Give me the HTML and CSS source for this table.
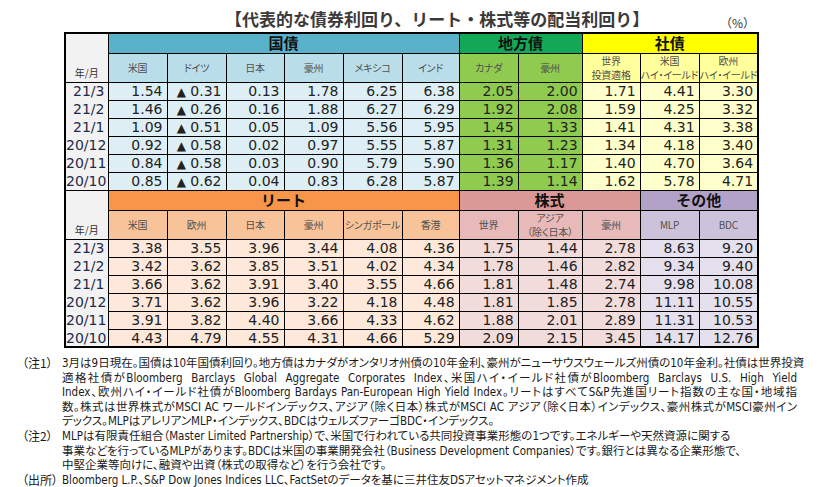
FILE: index.html
```html
<!DOCTYPE html>
<html lang="ja">
<head>
<meta charset="utf-8">
<link rel="stylesheet" href="styles.css">
</head>
<body>
<div class="page">
  <div class="head">
    <div class="title">【代表的な債券利回り、リート・株式等の配当利回り】</div>
    <div class="unit">（%）</div>
  </div>
  <table class="tbl">
    <colgroup>
      <col style="width:43px"><col style="width:59px"><col style="width:59px"><col style="width:58px"><col style="width:59px"><col style="width:59px"><col style="width:57px"><col style="width:59px"><col style="width:64px"><col style="width:58px"><col style="width:59px"><col style="width:59px">
    </colgroup>
    <tbody>
      <tr class="h1">
        <td class="ym" rowspan="2">年/月</td>
        <td class="grp a-h" colspan="6">国債</td>
        <td class="grp b-h" colspan="2">地方債</td>
        <td class="grp c-h" colspan="3">社債</td>
      </tr>
      <tr class="h2">
        <td class="sub a-s">米国</td><td class="sub a-s">ドイツ</td><td class="sub a-s">日本</td><td class="sub a-s">豪州</td><td class="sub a-s">メキシコ</td><td class="sub a-s">インド</td>
        <td class="sub b-s">カナダ</td><td class="sub b-s">豪州</td>
        <td class="sub c-s">世界<br>投資適格</td><td class="sub c-s">米国<br>ハイ・イールド</td><td class="sub c-s">欧州<br>ハイ・イールド</td>
      </tr>
      <tr class="dr"><td class="yr">21/3</td><td class="a-d">1.54</td><td class="a-d"><span class="neg">▲</span> 0.31</td><td class="a-d">0.13</td><td class="a-d">1.78</td><td class="a-d">6.25</td><td class="a-d">6.38</td><td class="b-d">2.05</td><td class="b-d">2.00</td><td class="c-d">1.71</td><td class="c-d">4.41</td><td class="c-d">3.30</td></tr>
      <tr class="dr"><td class="yr">21/2</td><td class="a-d">1.46</td><td class="a-d"><span class="neg">▲</span> 0.26</td><td class="a-d">0.16</td><td class="a-d">1.88</td><td class="a-d">6.27</td><td class="a-d">6.29</td><td class="b-d">1.92</td><td class="b-d">2.08</td><td class="c-d">1.59</td><td class="c-d">4.25</td><td class="c-d">3.32</td></tr>
      <tr class="dr"><td class="yr">21/1</td><td class="a-d">1.09</td><td class="a-d"><span class="neg">▲</span> 0.51</td><td class="a-d">0.05</td><td class="a-d">1.09</td><td class="a-d">5.56</td><td class="a-d">5.95</td><td class="b-d">1.45</td><td class="b-d">1.33</td><td class="c-d">1.41</td><td class="c-d">4.31</td><td class="c-d">3.38</td></tr>
      <tr class="dr"><td class="yr">20/12</td><td class="a-d">0.92</td><td class="a-d"><span class="neg">▲</span> 0.58</td><td class="a-d">0.02</td><td class="a-d">0.97</td><td class="a-d">5.55</td><td class="a-d">5.87</td><td class="b-d">1.31</td><td class="b-d">1.23</td><td class="c-d">1.34</td><td class="c-d">4.18</td><td class="c-d">3.40</td></tr>
      <tr class="dr"><td class="yr">20/11</td><td class="a-d">0.84</td><td class="a-d"><span class="neg">▲</span> 0.58</td><td class="a-d">0.03</td><td class="a-d">0.90</td><td class="a-d">5.79</td><td class="a-d">5.90</td><td class="b-d">1.36</td><td class="b-d">1.17</td><td class="c-d">1.40</td><td class="c-d">4.70</td><td class="c-d">3.64</td></tr>
      <tr class="dr"><td class="yr">20/10</td><td class="a-d">0.85</td><td class="a-d"><span class="neg">▲</span> 0.62</td><td class="a-d">0.04</td><td class="a-d">0.83</td><td class="a-d">6.28</td><td class="a-d">5.87</td><td class="b-d">1.39</td><td class="b-d">1.14</td><td class="c-d">1.62</td><td class="c-d">5.78</td><td class="c-d">4.71</td></tr>

      <tr class="h1">
        <td class="ym" rowspan="2">年/月</td>
        <td class="grp d-h" colspan="6">リート</td>
        <td class="grp e-h" colspan="3">株式</td>
        <td class="grp f-h" colspan="2">その他</td>
      </tr>
      <tr class="h2">
        <td class="sub d-s">米国</td><td class="sub d-s">欧州</td><td class="sub d-s">日本</td><td class="sub d-s">豪州</td><td class="sub d-s">シンガポール</td><td class="sub d-s">香港</td>
        <td class="sub e-s">世界</td><td class="sub e-s">アジア<br>（除く日本）</td><td class="sub e-s">豪州</td>
        <td class="sub f-s">MLP</td><td class="sub f-s">BDC</td>
      </tr>
      <tr class="dr"><td class="yr">21/3</td><td class="d-d">3.38</td><td class="d-d">3.55</td><td class="d-d">3.96</td><td class="d-d">3.44</td><td class="d-d">4.08</td><td class="d-d">4.36</td><td class="e-d">1.75</td><td class="e-d">1.44</td><td class="e-d">2.78</td><td class="f-d">8.63</td><td class="f-d">9.20</td></tr>
      <tr class="dr"><td class="yr">21/2</td><td class="d-d">3.42</td><td class="d-d">3.62</td><td class="d-d">3.85</td><td class="d-d">3.51</td><td class="d-d">4.02</td><td class="d-d">4.34</td><td class="e-d">1.78</td><td class="e-d">1.46</td><td class="e-d">2.82</td><td class="f-d">9.34</td><td class="f-d">9.40</td></tr>
      <tr class="dr"><td class="yr">21/1</td><td class="d-d">3.66</td><td class="d-d">3.62</td><td class="d-d">3.91</td><td class="d-d">3.40</td><td class="d-d">3.55</td><td class="d-d">4.66</td><td class="e-d">1.81</td><td class="e-d">1.48</td><td class="e-d">2.74</td><td class="f-d">9.98</td><td class="f-d">10.08</td></tr>
      <tr class="dr"><td class="yr">20/12</td><td class="d-d">3.71</td><td class="d-d">3.62</td><td class="d-d">3.96</td><td class="d-d">3.22</td><td class="d-d">4.18</td><td class="d-d">4.48</td><td class="e-d">1.81</td><td class="e-d">1.85</td><td class="e-d">2.78</td><td class="f-d">11.11</td><td class="f-d">10.55</td></tr>
      <tr class="dr"><td class="yr">20/11</td><td class="d-d">3.91</td><td class="d-d">3.82</td><td class="d-d">4.40</td><td class="d-d">3.66</td><td class="d-d">4.33</td><td class="d-d">4.62</td><td class="e-d">1.88</td><td class="e-d">2.01</td><td class="e-d">2.89</td><td class="f-d">11.31</td><td class="f-d">10.53</td></tr>
      <tr class="dr last"><td class="yr">20/10</td><td class="d-d">4.43</td><td class="d-d">4.79</td><td class="d-d">4.55</td><td class="d-d">4.31</td><td class="d-d">4.66</td><td class="d-d">5.29</td><td class="e-d">2.09</td><td class="e-d">2.15</td><td class="e-d">3.45</td><td class="f-d">14.17</td><td class="f-d">12.76</td></tr>
    </tbody>
  </table>

  <div class="notes">
    <div class="lbl">（注1）</div>
    <div class="body">
      <span class="jl">3月は9日現在。国債は10年国債利回り。地方債はカナダがオンタリオ州債の10年金利、豪州がニューサウスウェールズ州債の10年金利。社債は世界投資</span>
      <span class="jl ws">適格社債がBloomberg Barclays Global Aggregate Corporates Index、米国ハイ・イールド社債がBloomberg Barclays U.S. High Yield</span>
      <span class="jl">Index、欧州ハイ・イールド社債がBloomberg Bardays Pan-European High Yield Index。リートはすべてS&amp;P先進国リート指数の主な国・地域指</span>
      <span class="jl">数。株式は世界株式がMSCI AC ワールドインデックス、アジア（除く日本）株式がMSCI AC アジア（除く日本）インデックス、豪州株式がMSCI豪州イン</span>
      <span class="ln">デックス。MLPはアレリアンMLP・インデックス、BDCはウェルズファーゴBDC・インデックス。</span>
    </div>
    <div class="lbl">（注2）</div>
    <div class="body">
      <span class="ln">MLPは有限責任組合（Master Limited Partnership）で、米国で行われている共同投資事業形態の1つです。エネルギーや天然資源に関する</span>
      <span class="ln">事業などを行っているMLPがあります。BDCは米国の事業開発会社（Business Development Companies）です。銀行とは異なる企業形態で、</span>
      <span class="ln">中堅企業等向けに、融資や出資（株式の取得など）を行う会社です。</span>
    </div>
    <div class="lbl">（出所）</div>
    <div class="body">
      <span class="ln">Bloomberg L.P.、S&amp;P Dow Jones Indices LLC、FactSetのデータを基に三井住友DSアセットマネジメント作成</span>
    </div>
  </div>
</div>
</body>
</html>
```

FILE: styles.css
```css
* { box-sizing: border-box; }
html, body { margin: 0; padding: 0; background: #ffffff; }
body {
  font-family: "DejaVu Sans", "Noto Sans CJK JP", sans-serif;
  color: #1a1a1a;
}
.page {
  width: 817px;
  height: 487px;
  padding-left: 22px;
  overflow: hidden;
}
.head {
  display: flex;
  align-items: center;
  height: 32px;
  padding-left: 203px;
  width: 735px;
}
.title {
  font-family: "Noto Sans CJK JP", sans-serif;
  font-weight: 700;
  font-size: 17px;
  line-height: 20px;
  color: #3a3a3a;
  padding-top: 6px;
}
.unit {
  margin-left: auto;
  margin-right: 2px;
  font-family: "Noto Sans CJK JP", sans-serif;
  font-size: 12px;
  color: #333;
  padding-top: 12px;
}
.tbl {
  margin-left: 42px;
  border-collapse: collapse;
  table-layout: fixed;
  width: 693px;
  border: 2px solid #000;
}
.tbl td {
  padding: 0;
  border: 1px solid #000;
  white-space: nowrap;
  overflow: hidden;
}
.h1 { height: 20px; }
.h2 { height: 28px; }
.dr { height: 18px; }
.grp {
  font-family: "Noto Sans CJK JP", sans-serif;
  font-weight: 700;
  font-size: 15px;
  line-height: 18px;
  text-align: center;
  color: #111;
}
.sub {
  font-family: "Noto Sans CJK JP", sans-serif;
  font-feature-settings: "palt";
  font-size: 10px;
  line-height: 14px;
  letter-spacing: -0.2px;
  text-align: center;
  color: #505050;
}
.ym {
  background: #f2f2f2;
  font-family: "Noto Sans CJK JP", sans-serif;
  font-size: 10px;
  color: #333;
  vertical-align: bottom;
  text-align: center;
  padding-bottom: 2px !important;
}
.dr td {
  text-align: right;
  font-size: 14px;
  line-height: 16px;
  padding-right: 4px;
  color: #222;
}
.neg { font-size: 12px; }
.dr td.yr {
  background: #f2f2f2;
  color: #1f2a4a;
  border-top: none;
  border-bottom: none;
  padding-right: 3px;
}
.dr.last td.yr { border-bottom: 1px solid #000; }

.a-h { background: #5ab2ca; }
.a-s { background: #b9deea; }
.a-d { background: #ddeff5; }
.b-h { background: #13a856; }
.b-s, .b-d { background: #8fcb4f; }
.c-h { background: #ffff00; }
.c-s { background: #ffff9c; }
.c-d { background: #ffffcc; }
.d-h { background: #f7954a; }
.d-s { background: #f9c39a; }
.d-d { background: #fde8da; }
.e-h { background: #da9896; }
.e-s { background: #e7b9b8; }
.e-d { background: #f2dcdb; }
.f-h { background: #b2a2c8; }
.f-s { background: #cdc2db; }
.f-d { background: #e5e0ed; }

.notes {
  display: grid;
  grid-template-columns: 40px 735px;
  margin-top: 8px;
  font-family: "DejaVu Sans Condensed", "DejaVu Sans", "Noto Sans CJK JP", sans-serif;
  font-feature-settings: "palt";
  font-size: 11.5px;
  line-height: 14.6px;
  color: #1a1a1a;
}
.lbl {
  font-family: "Noto Sans CJK JP", sans-serif;
  font-size: 12px;
  line-height: 14.6px;
}
.body { display: flex; flex-direction: column; }
.jl {
  display: block;
  white-space: nowrap;
  text-align: justify;
  text-align-last: justify;
}
.ws { word-spacing: 4px; }
.ln { display: block; white-space: nowrap; }
```
